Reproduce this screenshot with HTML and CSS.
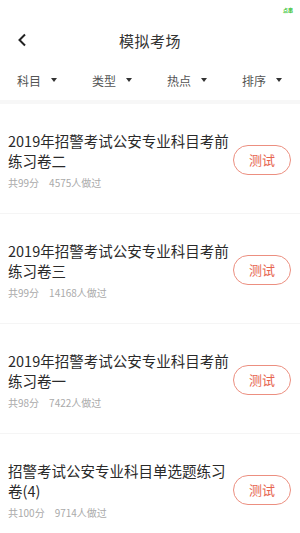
FILE: index.html
```html
<!DOCTYPE html>
<html lang="zh-CN">
<head>
<meta charset="utf-8">
<title>模拟考场</title>
<link rel="stylesheet" href="styles.css">
</head>
<body>
<div class="status"><span class="status-tag">点串</span></div>
<header class="nav">
  <span class="back"><svg width="10" height="14" viewBox="0 0 10 14"><path d="M8 1.5 L2.5 7 L8 12.5" fill="none" stroke="#222" stroke-width="2"/></svg></span>
  <h1 class="title">模拟考场</h1>
</header>
<div class="filters">
  <div class="filter">科目<span class="caret"></span></div>
  <div class="filter">类型<span class="caret"></span></div>
  <div class="filter">热点<span class="caret"></span></div>
  <div class="filter">排序<span class="caret"></span></div>
</div>
<div class="list">
  <div class="item">
    <div class="info">
      <div class="name">2019年招警考试公安专业科目考前练习卷二</div>
      <div class="meta"><span>共99分</span><span>4575人做过</span></div>
    </div>
    <button class="btn">测试</button>
  </div>
  <div class="item">
    <div class="info">
      <div class="name">2019年招警考试公安专业科目考前练习卷三</div>
      <div class="meta"><span>共99分</span><span>14168人做过</span></div>
    </div>
    <button class="btn">测试</button>
  </div>
  <div class="item">
    <div class="info">
      <div class="name">2019年招警考试公安专业科目考前练习卷一</div>
      <div class="meta"><span>共98分</span><span>7422人做过</span></div>
    </div>
    <button class="btn">测试</button>
  </div>
  <div class="item">
    <div class="info">
      <div class="name">招警考试公安专业科目单选题练习卷(4)</div>
      <div class="meta"><span>共100分</span><span>9714人做过</span></div>
    </div>
    <button class="btn">测试</button>
  </div>
</div>
</body>
</html>
```
FILE: styles.css
```css
* { box-sizing: border-box; }
html, body { margin: 0; padding: 0; background: #fff; }
body {
  width: 300px;
  height: 533px;
  overflow: hidden;
  font-family: "Noto Sans CJK SC", "Noto Sans", sans-serif;
  color: #333;
}
.status {
  height: 20px;
  display: flex;
  justify-content: flex-end;
  align-items: center;
  padding-right: 7px;
}
.status-tag {
  font-size: 5px;
  line-height: 6px;
  color: #2fbf2f;
  font-weight: 700;
}
.nav {
  height: 40px;
  display: flex;
  align-items: center;
  justify-content: center;
  position: relative;
}
.back {
  position: absolute;
  left: 17px;
  top: 13px;
  display: flex;
}
.title {
  margin: 0;
  font-size: 15px;
  font-weight: 400;
  color: #333;
  letter-spacing: 0.5px;
}
.filters {
  height: 40px;
  display: grid;
  grid-template-columns: repeat(4, 75px);
  align-items: center;
}
.filter {
  padding-left: 17px;
  font-size: 12px;
  color: #555;
  display: flex;
  align-items: center;
}
.caret {
  margin-left: 10px;
  width: 0;
  height: 0;
  border-left: 3.5px solid transparent;
  border-right: 3.5px solid transparent;
  border-top: 4px solid #333;
}
.list {
  border-top: 4px solid #f7f7f7;
}
.item {
  height: 110px;
  display: flex;
  align-items: center;
  padding: 0 9px 0 8px;
  border-bottom: 1px solid #f5f5f5;
}
.info {
  flex: 1;
  padding-top: 2px;
}
.name {
  width: 222px;
  font-size: 14.5px;
  line-height: 20px;
  font-weight: 400;
  color: #2a2a2a;
}
.meta {
  margin-top: 6px;
  font-size: 10px;
  line-height: 12px;
  color: #aaa;
  display: flex;
  gap: 10px;
}
.btn {
  width: 58px;
  height: 30px;
  border: 1px solid #ec8f80;
  border-radius: 15px;
  background: #fff;
  color: #e6634d;
  font-family: inherit;
  font-size: 13px;
  padding: 0;
  margin-top: 2px;
}
```
